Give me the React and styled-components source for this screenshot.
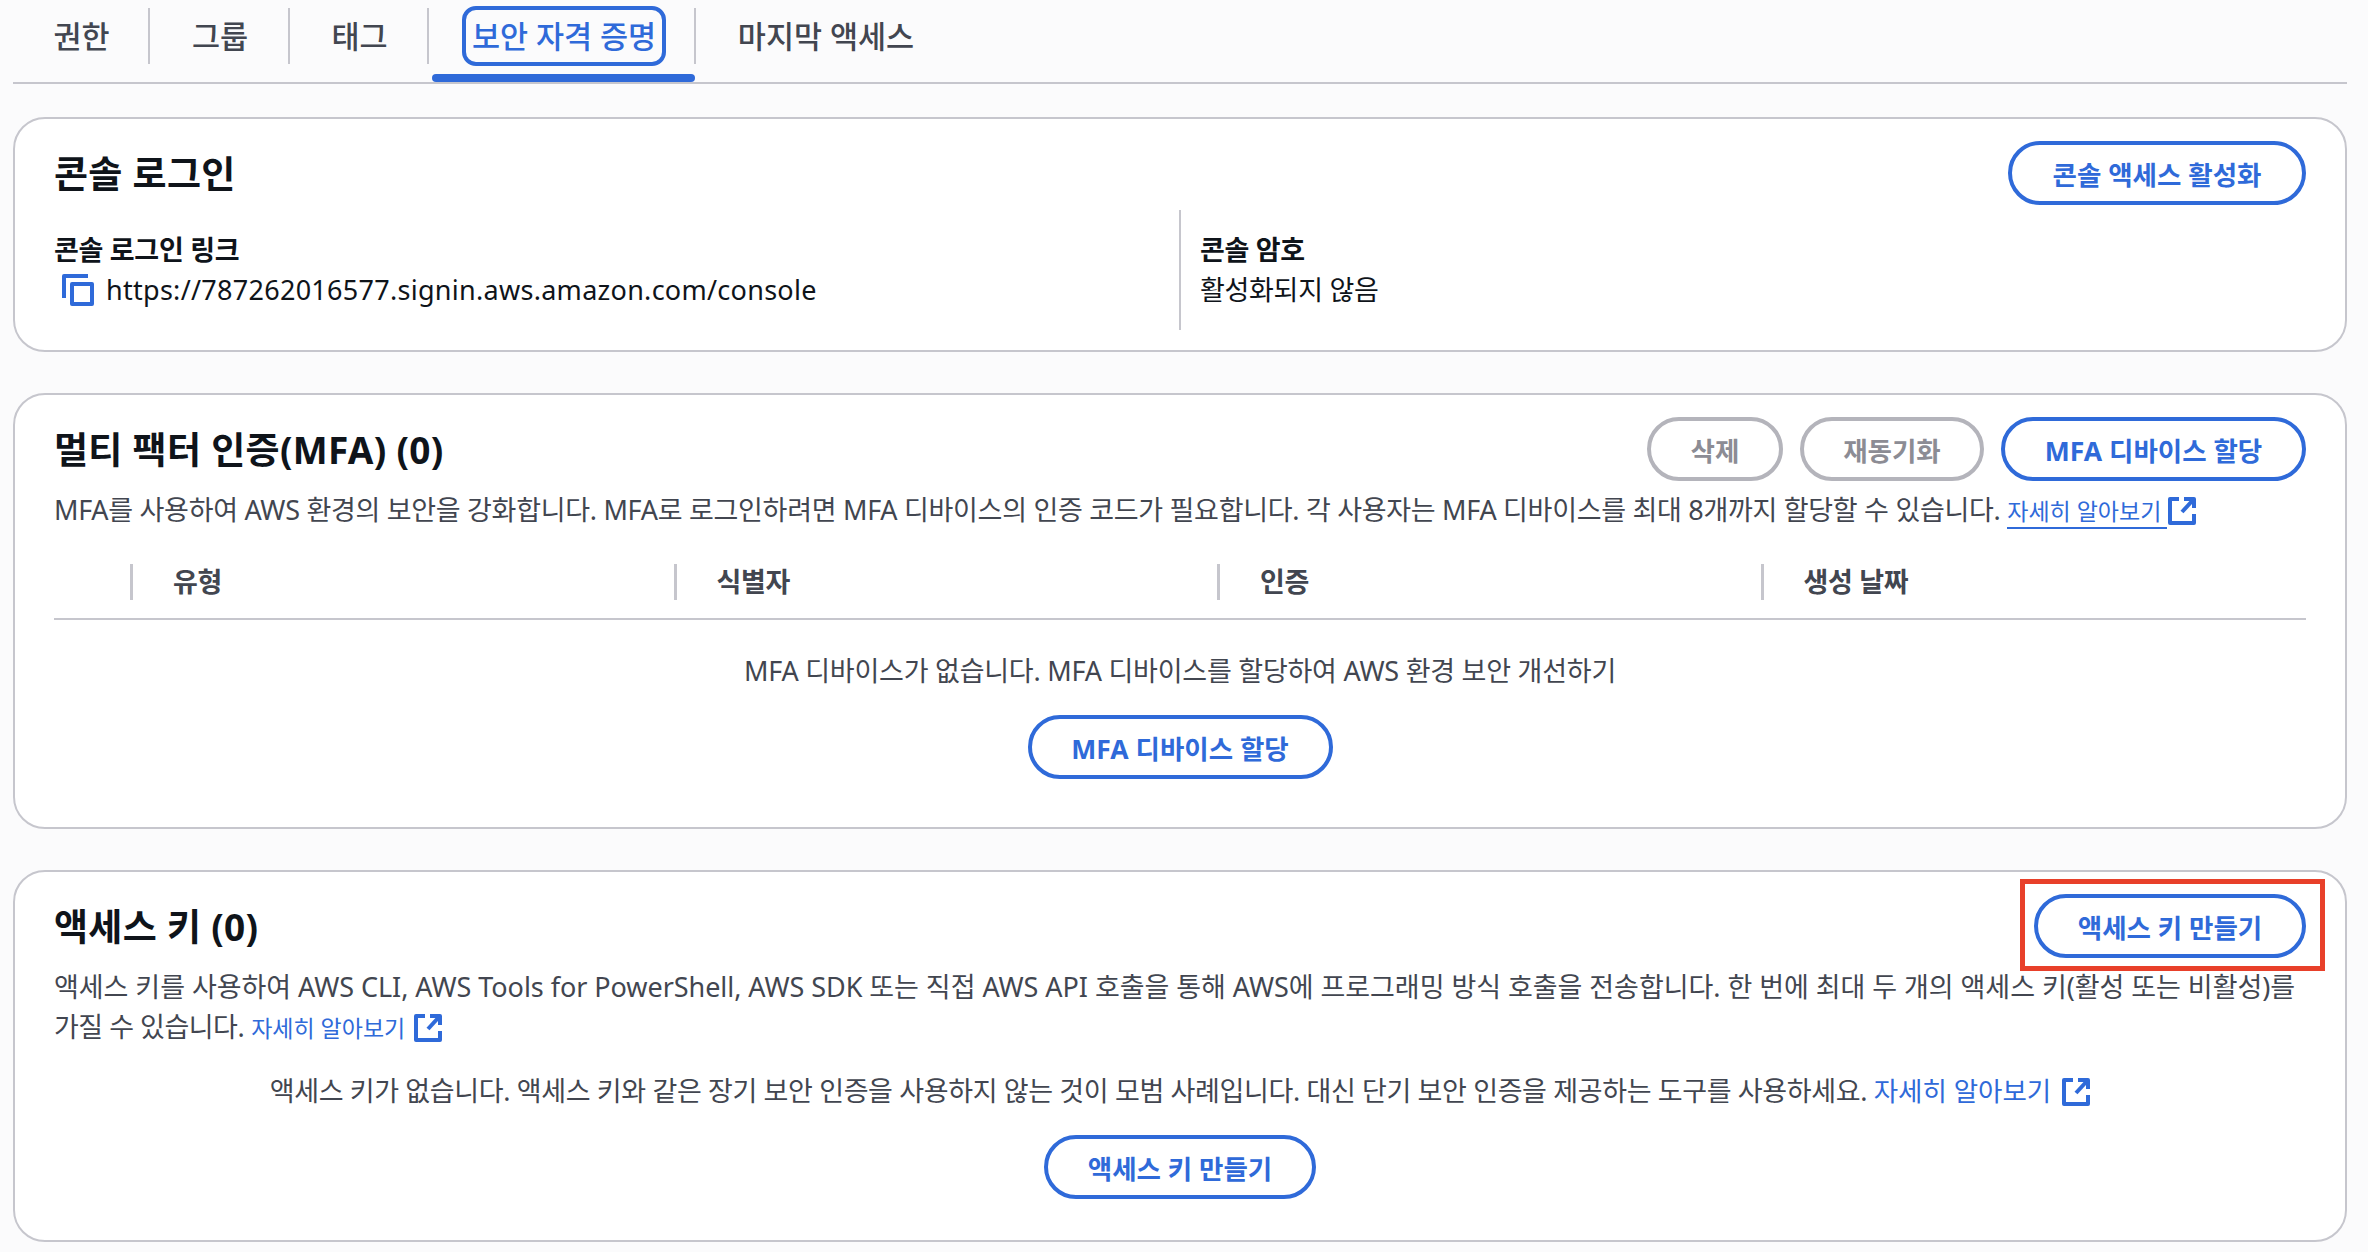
import styled, { createGlobalStyle } from "styled-components";

const GlobalStyle = createGlobalStyle`
  body {
    margin: 0;
    background: #fbfbfc;
    color: #0f141a;
    font-family: "Noto Sans", "Noto Sans CJK KR", sans-serif;
    font-size: 27px;
  }
`;

const BLUE = "#2f6ad9";

/* ===== Page ===== */
const Page = styled.div`
  width: 2368px;
  height: 1252px;
  box-sizing: border-box;
  padding: 0 21px 0 13px;
  overflow: hidden;
`;

/* ===== Tabs ===== */
const TabBar = styled.div`
  display: flex;
  height: 82px;
  border-bottom: 2px solid #c6c6cd;
`;

const Tab = styled.div`
  position: relative;
  display: flex;
  align-items: center;
  justify-content: center;
  box-sizing: border-box;
  width: ${({ $w }) => $w}px;
  height: 72px;
  padding-bottom: 2px;
  font-size: 30.5px;
  font-weight: 500;
  color: ${({ $active }) => ($active ? BLUE : "#424650")};

  &::after {
    content: "";
    display: ${({ $last }) => ($last ? "none" : "block")};
    position: absolute;
    right: 0;
    top: 8px;
    height: 56px;
    width: 2px;
    background: #c6c6cd;
  }
`;

const TabFocus = styled.span`
  position: absolute;
  top: 6px;
  left: 33px;
  display: flex;
  align-items: center;
  justify-content: center;
  width: 204px;
  height: 60px;
  padding-bottom: 2px;
  box-sizing: border-box;
  border: 4px solid ${BLUE};
  border-radius: 14px;
`;

const TabUnderline = styled.span`
  position: absolute;
  left: 3px;
  right: 1px;
  top: 74px;
  height: 8px;
  border-radius: 4px;
  background: ${BLUE};
`;

/* ===== Cards ===== */
const Card = styled.section`
  box-sizing: border-box;
  height: ${({ $h }) => $h}px;
  margin-top: ${({ $mt }) => $mt}px;
  padding: 22px 39px 0;
  background: #fff;
  border: 2px solid #c6c6cd;
  border-radius: 32px;
`;

const CardHead = styled.div`
  display: flex;
  align-items: center;
  justify-content: space-between;
`;

const Title = styled.h2`
  margin: 0;
  padding-bottom: 2px;
  font-size: 37px;
  font-weight: 700;
  letter-spacing: 0.3px;
  color: #0f141a;
`;

const Actions = styled.div`
  display: flex;
  gap: 17px;
`;

const Button = styled.button`
  box-sizing: border-box;
  width: ${({ $w }) => $w}px;
  height: 64px;
  padding: 0;
  background: #fff;
  border: 4px solid ${({ $off }) => ($off ? "#b4b4bb" : BLUE)};
  border-radius: 32px;
  color: ${({ $off }) => ($off ? "#8c8c94" : BLUE)};
  font-family: inherit;
  font-size: 26.5px;
  font-weight: 700;
`;

const OutlinedBox = styled.div`
  position: absolute;
  top: -15px;
  right: -19px;
  bottom: -13px;
  left: -14px;
  border: 5px solid #e8402a;
`;

const ButtonWrap = styled.div`
  position: relative;
`;

/* ===== Console login ===== */
const Columns = styled.div`
  display: grid;
  grid-template-columns: 1125px 1fr;
  margin-top: 5px;
`;

const Col = styled.div`
  padding: 20px 0 20px ${({ $divided }) => ($divided ? "19px" : "0")};
  border-left: ${({ $divided }) => ($divided ? "2px solid #c6c6cd" : "none")};
`;

const Label = styled.div`
  font-weight: 700;
  line-height: 40px;
  letter-spacing: -0.3px;
`;

const Value = styled.div`
  display: flex;
  align-items: center;
  gap: 12px;
  line-height: 40px;
  letter-spacing: ${({ $ls }) => $ls}px;
  color: #0f141a;

  svg {
    margin-left: 8px;
  }
`;

/* ===== Text ===== */
const Desc = styled.p`
  margin: 9px 0 0;
  line-height: 40px;
  letter-spacing: ${({ $ls }) => $ls}px;
  color: #424650;
`;

const Tight = styled.span`
  letter-spacing: -0.5px;
`;

const Link = styled.a`
  padding-right: ${({ $under }) => ($under ? "6px" : "0")};
  border-bottom: ${({ $under }) => ($under ? `2px solid ${BLUE}` : "none")};
  color: ${BLUE};
  white-space: nowrap;
  font-size: ${({ $size }) => $size}px;
  letter-spacing: 0;
`;

const Center = styled.div`
  display: flex;
  flex-direction: column;
  align-items: center;
  gap: ${({ $gap }) => $gap}px;
  margin-top: ${({ $mt }) => $mt}px;
  letter-spacing: ${({ $ls }) => $ls}px;
  color: #424650;
`;

/* ===== MFA table head ===== */
const TableHead = styled.div`
  display: grid;
  grid-template-columns: repeat(4, 543.5px);
  height: 72px;
  margin-top: 15px;
  padding-left: 76px;
  align-items: center;
  border-bottom: 2px solid #c6c6cd;
`;

const HeadCell = styled.div`
  height: 36px;
  padding-left: 40px;
  border-left: 3px solid #c6c6cd;
  font-size: 27px;
  font-weight: 600;
  line-height: 36px;
  letter-spacing: -0.3px;
  color: #424650;
`;

/* ===== Icons ===== */
const IconSlot = styled.svg`
  margin-left: ${({ $ml }) => $ml}px;
  vertical-align: -5px;
`;

const CopyIcon = () => (
  <svg width="32" height="32" viewBox="0 0 32 32" fill="none" stroke={BLUE} strokeWidth="4" strokeLinejoin="round">
    <path d="M2 24V2h24" />
    <rect x="10" y="10" width="20" height="20" />
  </svg>
);

const ExternalIcon = ({ ml }) => (
  <IconSlot
    $ml={ml}
    width="28"
    height="28"
    viewBox="0 0 28 28"
    fill="none"
    stroke={BLUE}
    strokeWidth="4"
    strokeLinejoin="round"
  >
    <path d="M11 2H2v24h24v-9" />
    <path d="M14 15L25 3" />
    <path d="M16 2h10v9" />
  </IconSlot>
);

export default function App() {
  return (
    <Page>
      <GlobalStyle />

      <TabBar>
        <Tab $w={137}>권한</Tab>
        <Tab $w={140}>그룹</Tab>
        <Tab $w={139}>태그</Tab>
        <Tab $w={267} $active>
          <TabFocus>보안 자격 증명</TabFocus>
          <TabUnderline />
        </Tab>
        <Tab $w={260} $last>마지막 액세스</Tab>
      </TabBar>

      <Card $h={235} $mt={33}>
        <CardHead>
          <Title>콘솔 로그인</Title>
          <Button $w={298}>콘솔 액세스 활성화</Button>
        </CardHead>
        <Columns>
          <Col>
            <Label>콘솔 로그인 링크</Label>
            <Value $ls={0.28}>
              <CopyIcon />
              https://787262016577.signin.aws.amazon.com/console
            </Value>
          </Col>
          <Col $divided>
            <Label>콘솔 암호</Label>
            <Value $ls={-0.3}>활성화되지 않음</Value>
          </Col>
        </Columns>
      </Card>

      <Card $h={436} $mt={41}>
        <CardHead>
          <Title>멀티 팩터 인증(MFA) (0)</Title>
          <Actions>
            <Button $w={136} $off>삭제</Button>
            <Button $w={184} $off>재동기화</Button>
            <Button $w={305}>MFA 디바이스 할당</Button>
          </Actions>
        </CardHead>
        <Desc $ls={-0.3}>
          MFA를 사용하여 AWS 환경의 보안을 강화합니다. MFA로 로그인하려면 MFA 디바이스의 인증 코드가 필요합니다. 각 사용자는 MFA 디바이스를 최대 8개까지 할당할 수 있습니다.{" "}
          <Link $under $size={23}>자세히 알아보기</Link>
          <ExternalIcon ml={1} />
        </Desc>
        <TableHead>
          <HeadCell>유형</HeadCell>
          <HeadCell>식별자</HeadCell>
          <HeadCell>인증</HeadCell>
          <HeadCell>생성 날짜</HeadCell>
        </TableHead>
        <Center $mt={30} $gap={26} $ls={-0.24}>
          <span>MFA 디바이스가 없습니다. MFA 디바이스를 할당하여 AWS 환경 보안 개선하기</span>
          <Button $w={305}>MFA 디바이스 할당</Button>
        </Center>
      </Card>

      <Card $h={372} $mt={41}>
        <CardHead>
          <Title>액세스 키 (0)</Title>
          <ButtonWrap>
            <Button $w={272}>액세스 키 만들기</Button>
            <OutlinedBox />
          </ButtonWrap>
        </CardHead>
        <Desc $ls={-0.05}>
          액세스 키를 사용하여 AWS CLI, AWS Tools for PowerShell, AWS SDK 또는 직접 AWS API 호출을 통해 AWS에 프로그래밍 방식 호출을 전송합니다. 한 번에 최대 두 개의 액세스 키(활성 또는 비활성)를 <Tight>가질 수 있습니다.</Tight>{" "}
          <Link $size={23}>자세히 알아보기</Link>
          <ExternalIcon ml={9} />
        </Desc>
        <Center $mt={22} $gap={26} $ls={-0.37}>
          <span>
            액세스 키가 없습니다. 액세스 키와 같은 장기 보안 인증을 사용하지 않는 것이 모범 사례입니다. 대신 단기 보안 인증을 제공하는 도구를 사용하세요.{" "}
            <Link $size={26.5}>자세히 알아보기</Link>
            <ExternalIcon ml={11} />
          </span>
          <Button $w={272}>액세스 키 만들기</Button>
        </Center>
      </Card>
    </Page>
  );
}
